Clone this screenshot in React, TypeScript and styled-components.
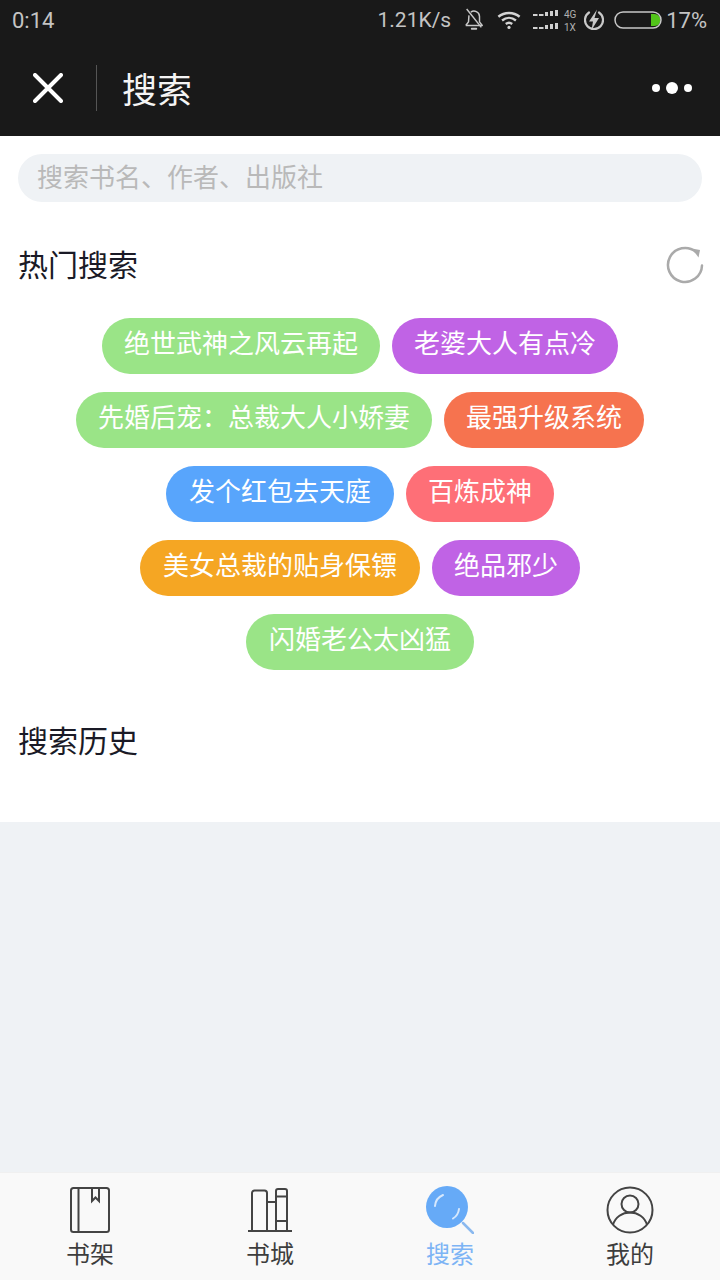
import React from 'react'
import styled, { createGlobalStyle } from 'styled-components'

const GlobalStyle = createGlobalStyle`
  html, body {
    margin: 0;
    padding: 0;
    background: #eff2f5;
  }
  * {
    box-sizing: border-box;
  }
`

const CJK = `"Noto Sans CJK SC", "Noto Sans", sans-serif`

const Page = styled.div`
  display: flex;
  flex-direction: column;
  width: 720px;
  height: 1280px;
  overflow: hidden;
  font-family: ${CJK};
  background-color: #eff2f5;
`

const StatusBar = styled.div`
  display: flex;
  align-items: center;
  justify-content: space-between;
  flex-shrink: 0;
  height: 40px;
  padding: 0 13px 0 12px;
  background-color: #191919;
  color: #c4c4c4;
  font-family: Roboto, sans-serif;
  font-size: 22px;
`

const StatusRight = styled.div`
  display: flex;
  align-items: center;
`

const NavBar = styled.div`
  display: flex;
  align-items: center;
  flex-shrink: 0;
  height: 96px;
  background-color: #191919;
  color: #fff;
`

const CloseButton = styled.div`
  display: flex;
  align-items: center;
  justify-content: center;
  width: 97px;
  height: 46px;
  border-right: 1px solid #555;
`

const NavTitle = styled.div`
  flex: 1;
  padding-left: 25px;
  font-size: 35px;
  line-height: 46px;
  color: #f4f4f4;
`

const MoreDots = styled.div`
  display: flex;
  align-items: center;
  gap: 6px;
  margin-right: 28px;
`

const Dot = styled.span<{ $big?: boolean }>`
  display: block;
  width: ${p => (p.$big ? 12 : 8)}px;
  height: ${p => (p.$big ? 12 : 8)}px;
  border-radius: 50%;
  background-color: #fff;
`

const Content = styled.div`
  display: flex;
  flex-direction: column;
  flex-shrink: 0;
  height: 686px;
  padding: 18px 18px 0;
  background-color: #fff;
`

const SearchBox = styled.div`
  display: flex;
  align-items: center;
  flex-shrink: 0;
  height: 48px;
  padding-left: 19px;
  padding-bottom: 6px;
  border-radius: 24px;
  background-color: #eff2f5;
  color: #b9b9b9;
  font-size: 26px;
`

const SectionHeader = styled.div`
  display: flex;
  align-items: center;
  justify-content: space-between;
  flex-shrink: 0;
  height: 44px;
  margin-top: 41px;
`

const HistoryHeader = styled(SectionHeader)`
  margin-top: 49px;
`

const SectionTitle = styled.div`
  margin-top: -4px;
  color: #1a1a26;
  font-size: 30px;
  line-height: 44px;
`

const TagList = styled.div`
  display: flex;
  flex-direction: column;
  gap: 18px;
  flex-shrink: 0;
  margin-top: 31px;
`

const TagRow = styled.div`
  display: flex;
  justify-content: center;
  gap: 12px;
`

const Tag = styled.div<{ $color: string; $wide?: boolean }>`
  height: 56px;
  padding: 0 ${p => (p.$wide ? 23 : 22)}px;
  border-radius: 28px;
  background-color: ${p => p.$color};
  color: #fff;
  font-size: 26px;
  line-height: 48px;
  white-space: nowrap;
`

const Filler = styled.div`
  flex: 1;
`

const TabBar = styled.div`
  display: grid;
  grid-template-columns: repeat(4, 180px);
  flex-shrink: 0;
  height: 108px;
  border-top: 1px solid #f0f0f0;
  background-color: #f9f9f9;
`

const TabItem = styled.div<{ $active?: boolean }>`
  display: flex;
  flex-direction: column;
  align-items: center;
  padding-top: 12px;
  color: ${p => (p.$active ? '#7db4f5' : '#3d3d3d')};
  font-size: 24px;
`

const TabIcon = styled.div`
  display: flex;
  align-items: center;
  justify-content: center;
  height: 50px;
`

const TabLabel = styled.div`
  margin-top: 1px;
  line-height: 34px;
`

const Speed = styled.span`
  margin-right: 12px;
  font-size: 21px;
`

const Percent = styled.span`
  margin-left: 4px;
`

const Icon = styled.svg`
  display: block;
  flex-shrink: 0;
`

const RefreshIcon = styled(Icon)`
  margin-right: -2px;
`

const BellOff = () => (
  <Icon width="22" height="26" viewBox="0 0 24 26" fill="none" stroke="#c8c8c8" strokeWidth="1.6" style={{ marginRight: 12 }}>
    <path d="M3 19h18l-3-4V9a6 6 0 0 0-9.5-4.5M6.5 8 6 15l-3 4" strokeLinejoin="round" />
    <path d="M9.5 22.5h5" strokeWidth="2" strokeLinecap="round" />
    <path d="M4 1l16 20" />
  </Icon>
)

const Wifi = () => (
  <Icon width="24" height="20" viewBox="0 0 26 20" fill="none" stroke="#d4d4d4" strokeWidth="2.6" style={{ marginRight: 12 }}>
    <path d="M1.5 6.5c6.5-5.5 16.5-5.5 23 0" />
    <path d="M5.5 10.5c4.5-3.7 10.5-3.7 15 0" />
    <path d="M9.5 14.3c2.2-1.7 4.8-1.7 7 0" />
    <circle cx="13" cy="18" r="1.7" fill="#d4d4d4" stroke="none" />
  </Icon>
)

const SignalRow = ({ y }: { y: number }) => (
  <>
    {[0, 6, 12, 17, 22].map((x, i) => {
      const h = [2, 2, 4, 5, 6][i]
      return <rect key={x} x={x} y={y + 6 - h} width={i < 2 ? 4.5 : 3} height={h} fill="#d0d0d0" />
    })}
  </>
)

const Signal = () => (
  <Icon width="44" height="24" viewBox="0 0 44 24" style={{ marginRight: 7 }}>
    <SignalRow y={2} />
    <SignalRow y={15} />
    <text x="31" y="9.5" fontSize="10" fill="#b0b0b0" fontFamily="Roboto, sans-serif">4G</text>
    <text x="31" y="23" fontSize="10" fill="#b0b0b0" fontFamily="Roboto, sans-serif">1X</text>
  </Icon>
)

const Charging = () => (
  <Icon width="20" height="22" viewBox="0 0 20 22" fill="none" style={{ marginRight: 10 }}>
    <path d="M5 3.5a9 9 0 1 0 10 0" stroke="#c8c8c8" strokeWidth="2.2" strokeLinecap="round" />
    <path d="M13 0.5 5 12.5h4L7.5 21l7.5-12h-4.5z" fill="#c8c8c8" />
  </Icon>
)

const Battery = () => (
  <Icon width="48" height="18" viewBox="0 0 48 18" fill="none">
    <path d="M37 3h3.5a6 6 0 0 1 0 12H37z" fill="#52c41a" />
    <rect x="1" y="1" width="46" height="16" rx="8" stroke="#c8c8c8" strokeWidth="1.5" />
  </Icon>
)

const Refresh = () => (
  <RefreshIcon width="38" height="38" viewBox="0 0 38 38" fill="none">
    <path d="M36 19.5A17 17 0 1 1 30 6" stroke="#aaa" strokeWidth="2.5" strokeLinecap="round" />
    <path d="M26 2.5 34 4l-1.5 7.5z" fill="#aaa" />
  </RefreshIcon>
)

const BookshelfTab = () => (
  <Icon width="40" height="46" viewBox="0 0 40 46" fill="none" stroke="#444" strokeWidth="2">
    <rect x="1" y="1" width="38" height="44" rx="2.5" />
    <path d="M8.5 1v44" />
    <path d="M22 1v13l3.5-3.5L29 14V1" />
  </Icon>
)

const StoreTab = () => (
  <Icon width="46" height="44" viewBox="0 0 46 44" fill="none" stroke="#444" strokeWidth="2">
    <path d="M5 43V5a2.5 2.5 0 0 1 2.5-2.5h10A2.5 2.5 0 0 1 20 5v38" />
    <path d="M20 14h9" />
    <path d="M29 43V3a2 2 0 0 1 2-2h7a2 2 0 0 1 2 2v40" />
    <path d="M29 8.5h11M29 33h11" />
    <path d="M1 43h44" />
  </Icon>
)

const SearchTab = () => (
  <Icon width="48" height="48" viewBox="0 0 48 48" fill="none">
    <circle cx="21" cy="21" r="21" fill="#66aaf7" />
    <path d="M37 37l10 10" stroke="#8bb9ef" strokeWidth="2.5" strokeLinecap="round" />
    <path d="M9 20c.5-5 3-9 8-11" stroke="#d6e8fd" strokeWidth="2" strokeLinecap="round" />
    <path d="M33 23c-.5 4-2.5 7.5-6 9.5" stroke="#d6e8fd" strokeWidth="2" strokeLinecap="round" />
  </Icon>
)

const MineTab = () => (
  <Icon width="48" height="48" viewBox="0 0 48 48" fill="none" stroke="#444" strokeWidth="2">
    <circle cx="24" cy="24" r="22.5" />
    <circle cx="24" cy="18" r="8.5" />
    <path d="M7 39c2-8 9.5-12.5 17-12.5S39 31 41 39" />
  </Icon>
)

const hotTags = [
  [
    { text: '绝世武神之风云再起', color: '#9ae487' },
    { text: '老婆大人有点冷', color: '#c063e5' },
  ],
  [
    { text: '先婚后宠\uFF1A总裁大人小娇妻', color: '#9ae487' },
    { text: '最强升级系统', color: '#f6734f' },
  ],
  [
    { text: '发个红包去天庭', color: '#58a5fc', wide: true },
    { text: '百炼成神', color: '#fe6f77' },
  ],
  [
    { text: '美女总裁的贴身保镖', color: '#f5a623', wide: true },
    { text: '绝品邪少', color: '#c063e5' },
  ],
  [{ text: '闪婚老公太凶猛', color: '#9ae487', wide: true }],
]

const tabs = [
  { label: '书架', icon: <BookshelfTab /> },
  { label: '书城', icon: <StoreTab /> },
  { label: '搜索', icon: <SearchTab />, active: true },
  { label: '我的', icon: <MineTab /> },
]

function App() {
  return (
    <Page>
      <GlobalStyle />
      <StatusBar>
        <span>0:14</span>
        <StatusRight>
          <Speed>1.21K/s</Speed>
          <BellOff />
          <Wifi />
          <Signal />
          <Charging />
          <Battery />
          <Percent>17%</Percent>
        </StatusRight>
      </StatusBar>
      <NavBar>
        <CloseButton>
          <Icon width="30" height="30" viewBox="0 0 30 30" stroke="#fff" strokeWidth="4" strokeLinecap="round">
            <path d="M2 2l26 26M28 2 2 28" />
          </Icon>
        </CloseButton>
        <NavTitle>搜索</NavTitle>
        <MoreDots>
          <Dot />
          <Dot $big />
          <Dot />
        </MoreDots>
      </NavBar>
      <Content>
        <SearchBox>搜索书名、作者、出版社</SearchBox>
        <SectionHeader>
          <SectionTitle>热门搜索</SectionTitle>
          <Refresh />
        </SectionHeader>
        <TagList>
          {hotTags.map((row, i) => (
            <TagRow key={i}>
              {row.map(tag => (
                <Tag key={tag.text} $color={tag.color} $wide={tag.wide}>{tag.text}</Tag>
              ))}
            </TagRow>
          ))}
        </TagList>
        <HistoryHeader>
          <SectionTitle>搜索历史</SectionTitle>
        </HistoryHeader>
      </Content>
      <Filler />
      <TabBar>
        {tabs.map(tab => (
          <TabItem key={tab.label} $active={tab.active}>
            <TabIcon>{tab.icon}</TabIcon>
            <TabLabel>{tab.label}</TabLabel>
          </TabItem>
        ))}
      </TabBar>
    </Page>
  )
}

export default App
